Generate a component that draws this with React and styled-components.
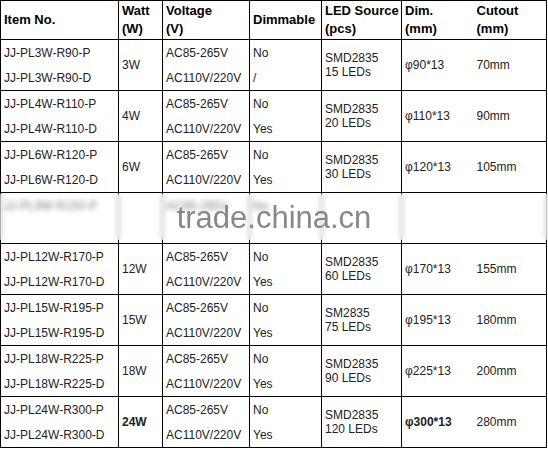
import React from "react";
import styled, { createGlobalStyle } from "styled-components";

const Global = createGlobalStyle`
  html, body { margin: 0; padding: 0; background: #fff; }
  body { font-family: "Liberation Sans", Arial, sans-serif; }
`;

const Wrap = styled.div`
  position: relative;
  width: 548px;
  height: 450px;
  overflow: hidden;
`;

const Table = styled.table`
  border-collapse: collapse;
  table-layout: fixed;
  width: 546px;
  font-family: "Liberation Sans", Arial, sans-serif;
`;

const Th = styled.th`
  border: 1px solid #000;
  border-right: ${(p) => (p.$noRight ? "none" : "1px solid #000")};
  border-left: ${(p) => (p.$noLeft ? "none" : "1px solid #000")};
  height: 38px;
  padding: 0 1px 0 3px;
  text-align: left;
  vertical-align: middle;
  font-size: 13px;
  font-weight: bold;
  line-height: 18px;
  color: #000;
  white-space: nowrap;
  overflow: hidden;
`;

const Td = styled.td`
  border-left: ${(p) => (p.$noLeft ? "none" : "1px solid #000")};
  border-right: ${(p) => (p.$noRight ? "none" : "1px solid #000")};
  border-top: ${(p) => (p.$pos === "bottom" ? "none" : "1px solid #000")};
  border-bottom: ${(p) => (p.$pos === "top" ? "none" : "1px solid #000")};
  height: 25px;
  padding: 0 1px 0 3px;
  text-align: left;
  vertical-align: middle;
  font-size: 12px;
  line-height: 14px;
  color: #222;
  white-space: nowrap;
  overflow: hidden;
  font-weight: ${(p) => (p.$bold ? "bold" : "normal")};
`;

const Blur = styled.div`
  position: absolute;
  left: 0;
  top: 194px;
  width: 548px;
  height: 46px;
  background: rgba(255, 255, 255, 0.45);
  backdrop-filter: blur(2.5px);
  display: flex;
  align-items: center;
  justify-content: center;
`;

const Watermark = styled.span`
  font-family: "Liberation Sans", Arial, sans-serif;
  font-size: 31px;
  color: rgba(115, 115, 115, 0.85);
  margin-left: 0;
  margin-top: 2px;
`;

const rows = [
  { item: "JJ-PL3W-R90", w: "3W", d2: "/", led: ["SMD2835", "15 LEDs"], dim: "φ90*13", cut: "70mm" },
  { item: "JJ-PL4W-R110", w: "4W", d2: "Yes", led: ["SMD2835", "20 LEDs"], dim: "φ110*13", cut: "90mm" },
  { item: "JJ-PL6W-R120", w: "6W", d2: "Yes", led: ["SMD2835", "30 LEDs"], dim: "φ120*13", cut: "105mm" },
  { item: "JJ-PL9W-R150", w: "", d2: "", led: ["", ""], dim: "", cut: "", hidden: true },
  { item: "JJ-PL12W-R170", w: "12W", d2: "Yes", led: ["SMD2835", "60 LEDs"], dim: "φ170*13", cut: "155mm" },
  { item: "JJ-PL15W-R195", w: "15W", d2: "Yes", led: ["SM2835", "75 LEDs"], dim: "φ195*13", cut: "180mm" },
  { item: "JJ-PL18W-R225", w: "18W", d2: "Yes", led: ["SMD2835", "90 LEDs"], dim: "φ225*13", cut: "200mm" },
  { item: "JJ-PL24W-R300", w: "24W", d2: "Yes", led: ["SMD2835", "120 LEDs"], dim: "φ300*13", cut: "280mm", bold: true },
];

export default function App() {
  return (
    <Wrap>
      <Global />
      <Table>
        <colgroup>
          <col style={{ width: 118 }} />
          <col style={{ width: 44 }} />
          <col style={{ width: 87 }} />
          <col style={{ width: 72 }} />
          <col style={{ width: 80 }} />
          <col style={{ width: 72 }} />
          <col style={{ width: 73 }} />
        </colgroup>
        <thead>
          <tr>
            <Th>Item No.</Th>
            <Th>Watt<br />(W)</Th>
            <Th>Voltage<br />(V)</Th>
            <Th>Dimmable</Th>
            <Th>LED Source<br />(pcs)</Th>
            <Th $noRight>Dim.<br />(mm)</Th>
            <Th $noLeft>Cutout<br />(mm)</Th>
          </tr>
        </thead>
        <tbody>
          {rows.map((r) => (
            <React.Fragment key={r.item}>
              <tr>
                <Td $pos="top">{r.item}-P</Td>
                <Td rowSpan={2} $bold={r.bold}>{r.w}</Td>
                <Td $pos="top">AC85-265V</Td>
                <Td $pos="top">No</Td>
                <Td rowSpan={2}>
                  {r.led[0]}
                  <br />
                  {r.led[1]}
                </Td>
                <Td rowSpan={2} $noRight $bold={r.bold}>{r.dim}</Td>
                <Td rowSpan={2} $noLeft>{r.cut}</Td>
              </tr>
              <tr>
                <Td $pos="bottom">{r.hidden ? "" : `${r.item}-D`}</Td>
                <Td $pos="bottom">{r.hidden ? "" : "AC110V/220V"}</Td>
                <Td $pos="bottom">{r.d2}</Td>
              </tr>
            </React.Fragment>
          ))}
        </tbody>
      </Table>
      <Blur>
        <Watermark>trade.china.cn</Watermark>
      </Blur>
    </Wrap>
  );
}
